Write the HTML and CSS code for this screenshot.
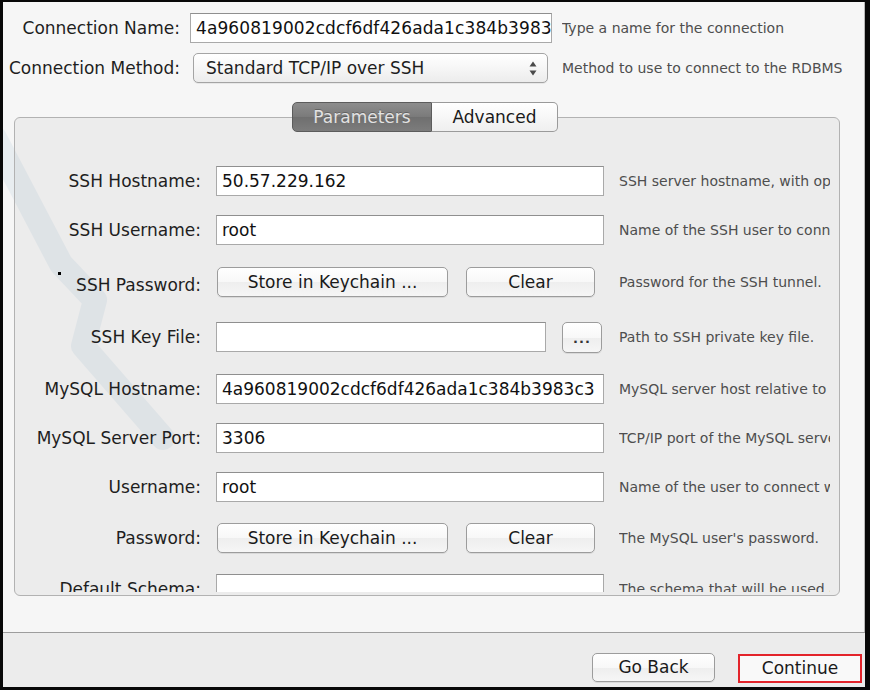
FILE: index.html
```html
<!DOCTYPE html>
<html>
<head>
<meta charset="utf-8">
<link rel="stylesheet" href="styles.css">
</head>
<body>
<div class="window">
  <div class="content">
    <svg class="watermark" width="200" height="470" viewBox="0 0 200 470">
      <polyline points="-8,136 58,262 92,298 80,344 160,436" fill="none" stroke="#cfdde7" stroke-width="24" stroke-linejoin="round" stroke-linecap="round"/>
    </svg>

    <div class="top-form">
      <div class="top-label">Connection Name:</div>
      <div class="field top-field">4a960819002cdcf6df426ada1c384b3983c3</div>
      <div class="top-hint">Type a name for the connection</div>

      <div class="top-label">Connection Method:</div>
      <div class="select">
        <span>Standard TCP/IP over SSH</span>
        <svg class="arrows" width="8" height="15" viewBox="0 0 8 15">
          <polygon points="0.5,5.5 4,0.5 7.5,5.5" fill="#4a4a4a"/>
          <polygon points="0.5,9.5 4,14.5 7.5,9.5" fill="#4a4a4a"/>
        </svg>
      </div>
      <div class="top-hint">Method to use to connect to the RDBMS</div>
    </div>

    <div class="tabs">
      <div class="tab tab--active">Parameters</div>
      <div class="tab tab--plain">Advanced</div>
    </div>

    <div class="panel">
      <div class="scroll">
        <div class="row">
          <div class="label">SSH Hostname:</div>
          <div class="control"><div class="field">50.57.229.162</div></div>
          <div class="hint">SSH server hostname, with optional port number.</div>
        </div>
        <div class="row">
          <div class="label">SSH Username:</div>
          <div class="control"><div class="field">root</div></div>
          <div class="hint">Name of the SSH user to connect with.</div>
        </div>
        <div class="row row--ssh-pass">
          <div class="label label--low"><span class="mark"></span>SSH Password:</div>
          <div class="control">
            <div class="btn btn--store">Store in Keychain ...</div>
            <div class="btn btn--clear">Clear</div>
          </div>
          <div class="hint">Password for the SSH tunnel.</div>
        </div>
        <div class="row row--file">
          <div class="label">SSH Key File:</div>
          <div class="control">
            <div class="field field--file"></div>
            <div class="btn btn--dots">...</div>
          </div>
          <div class="hint">Path to SSH private key file.</div>
        </div>
        <div class="row">
          <div class="label">MySQL Hostname:</div>
          <div class="control"><div class="field">4a960819002cdcf6df426ada1c384b3983c3</div></div>
          <div class="hint">MySQL server host relative to the SSH server.</div>
        </div>
        <div class="row">
          <div class="label">MySQL Server Port:</div>
          <div class="control"><div class="field">3306</div></div>
          <div class="hint">TCP/IP port of the MySQL server.</div>
        </div>
        <div class="row">
          <div class="label">Username:</div>
          <div class="control"><div class="field">root</div></div>
          <div class="hint">Name of the user to connect with.</div>
        </div>
        <div class="row row--pass">
          <div class="label">Password:</div>
          <div class="control">
            <div class="btn btn--store">Store in Keychain ...</div>
            <div class="btn btn--clear">Clear</div>
          </div>
          <div class="hint">The MySQL user's password.</div>
        </div>
        <div class="row">
          <div class="label">Default Schema:</div>
          <div class="control"><div class="field"></div></div>
          <div class="hint">The schema that will be used as default.</div>
        </div>
      </div>
    </div>
  </div>

  <div class="footer">
    <div class="btn btn--back">Go Back</div>
    <div class="btn btn--continue">Continue</div>
  </div>
</div>
</body>
</html>
```

FILE: styles.css
```css
* {
  box-sizing: border-box;
}

html, body {
  margin: 0;
  padding: 0;
}

body {
  width: 870px;
  height: 690px;
  overflow: hidden;
  background: #000;
  font-family: "DejaVu Sans", "Lucida Grande", sans-serif;
  font-size: 17px;
  color: #1e1e1e;
}

.window {
  width: 870px;
  height: 690px;
  border-style: solid;
  border-color: #080808;
  border-width: 2px 5px 3px 3px;
  display: flex;
  flex-direction: column;
  background: #f6f6f6;
}

.content {
  position: relative;
  z-index: 0;
  height: 630px;
  flex: none;
  padding-top: 11px;
  border-right: 1px solid #b8b8b8;
  background: #f6f6f6;
}

.watermark {
  position: absolute;
  left: 0;
  top: 0;
  z-index: -1;
  opacity: 0.35;
}

/* top form */
.top-form {
  display: grid;
  grid-template-columns: 177px 362px 1fr;
  column-gap: 10px;
  row-gap: 10px;
  align-items: center;
}

.top-label {
  text-align: right;
  white-space: nowrap;
}

.top-hint {
  font-size: 14px;
  color: #4e4e4e;
  white-space: nowrap;
  overflow: hidden;
}

.field {
  height: 30px;
  line-height: 28px;
  padding-left: 5px;
  background: #fff;
  border: 1px solid #a9a9a9;
  border-top-color: #8f8f8f;
  white-space: nowrap;
  overflow: hidden;
  color: #111;
}

.top-field {
  width: 362px;
  letter-spacing: 0.1px;
}

.select {
  height: 30px;
  margin: 0 4px 0 3px;
  padding: 0 10px 0 12px;
  display: flex;
  align-items: center;
  justify-content: space-between;
  background: linear-gradient(#ffffff, #f6f6f6 50%, #ececec);
  border: 1px solid #a4a4a4;
  border-radius: 5px;
  box-shadow: 0 1px 0 rgba(0, 0, 0, 0.06);
  white-space: nowrap;
}

/* tabs */
.tabs {
  position: relative;
  z-index: 1;
  margin-top: 19px;
  margin-left: 11px;
  width: 826px;
  display: flex;
  justify-content: center;
  padding-right: 4px;
}

.tab {
  height: 30px;
  line-height: 28px;
  text-align: center;
  white-space: nowrap;
}

.tab--active {
  width: 140px;
  color: #e2e2e2;
  background: linear-gradient(#8d8d8d, #7a7a7a 50%, #6f6f6f 51%, #7c7c7c);
  border: 1px solid #5c5c5c;
  border-radius: 5px 0 0 5px;
  text-shadow: 0 -1px 0 rgba(0, 0, 0, 0.25);
}

.tab--plain {
  width: 126px;
  color: #1a1a1a;
  background: linear-gradient(#ffffff, #f7f7f7 50%, #efefef);
  border: 1px solid #9a9a9a;
  border-left: none;
  border-radius: 0 5px 5px 0;
}

/* panel */
.panel {
  margin-top: -15px;
  margin-left: 11px;
  width: 826px;
  height: 479px;
  border: 1px solid #b2b2b2;
  border-radius: 6px;
  background: rgba(0, 0, 0, 0.04);
  padding: 0 9px 3px 0;
}

.scroll {
  height: 100%;
  overflow: hidden;
  padding-top: 48px;
  display: flex;
  flex-direction: column;
}

.row {
  flex: none;
  display: grid;
  grid-template-columns: 186px 388px 1fr;
  column-gap: 15px;
  align-items: center;
  height: 30px;
  margin-bottom: 19px;
}

.row--ssh-pass {
  margin-top: 3px;
  margin-bottom: 25px;
}

.row--file {
  margin-bottom: 22px;
}

.row--pass {
  margin-top: 2px;
  margin-bottom: 21px;
}

.label {
  text-align: right;
  white-space: nowrap;
}

.label--low {
  padding-top: 3px;
}

.mark {
  display: inline-block;
  width: 3px;
  height: 3px;
  background: #000;
  margin-right: 15px;
  vertical-align: 16px;
}

.hint {
  font-size: 14px;
  color: #4e4e4e;
  white-space: nowrap;
  overflow: hidden;
}

.control {
  display: flex;
  align-items: center;
  height: 30px;
}

.control .field {
  width: 388px;
}

.control .field--file {
  width: 330px;
}

/* buttons */
.btn {
  height: 30px;
  line-height: 28px;
  text-align: center;
  white-space: nowrap;
  background: linear-gradient(#ffffff, #f8f8f8 50%, #eeeeee 51%, #f6f6f6);
  border: 1px solid #9c9c9c;
  border-radius: 5px;
  box-shadow: 0 1px 0 rgba(0, 0, 0, 0.08);
  color: #1a1a1a;
}

.btn--store {
  width: 231px;
  margin-left: 1px;
}

.btn--clear {
  width: 129px;
  margin-left: 18px;
}

.btn--dots {
  width: 40px;
  height: 31px;
  margin-left: 16px;
  font-size: 13px;
  font-weight: bold;
  line-height: 32px;
  letter-spacing: 1px;
  color: #333;
}

/* footer */
.footer {
  flex: 1;
  border-top: 1px solid #9d9d9d;
  background: #ececec;
  display: flex;
  justify-content: flex-end;
  align-items: flex-start;
  padding: 20px 3px 0 0;
  gap: 23px;
}

.btn--back {
  width: 123px;
  height: 29px;
  line-height: 27px;
}

.btn--continue {
  width: 124px;
  height: 29px;
  margin-top: 1px;
  line-height: 25px;
  border: 2px solid #e3242b;
  border-radius: 0;
  background: #f9f9f9;
  box-shadow: none;
}
```
